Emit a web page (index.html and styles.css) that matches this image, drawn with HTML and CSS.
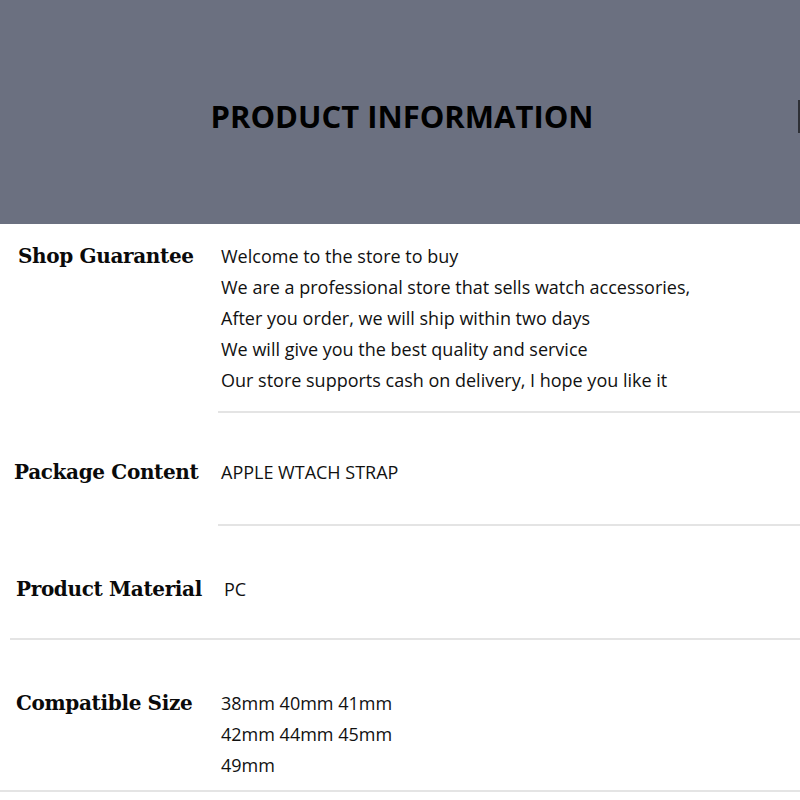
FILE: index.html
```html
<!DOCTYPE html>
<html lang="en">
<head>
    <meta charset="UTF-8">
    <meta name="viewport" content="width=device-width, initial-scale=1.0">
    <title>Product Information</title>
    <link rel="stylesheet" href="styles.css">
</head>
<body>
    <header class="banner">
        <h1 class="banner-title">PRODUCT INFORMATION</h1>
        <span class="banner-mark"></span>
    </header>

    <section class="info">
        <div class="info-row info-row--guarantee">
            <span class="info-label">Shop Guarantee</span>
            <div class="info-text">
                <p>Welcome to the store to buy</p>
                <p>We are a professional store that sells watch accessories,</p>
                <p>After you order, we will ship within two days</p>
                <p>We will give you the best quality and service</p>
                <p>Our store supports cash on delivery, I hope you like it</p>
            </div>
        </div>
        <div class="divider divider--short"></div>

        <div class="info-row info-row--package">
            <span class="info-label">Package Content</span>
            <div class="info-text">
                <p>APPLE WTACH STRAP</p>
            </div>
        </div>
        <div class="divider divider--short"></div>

        <div class="info-row info-row--material">
            <span class="info-label">Product Material</span>
            <div class="info-text info-text--nudge">
                <p>PC</p>
            </div>
        </div>
        <div class="divider divider--wide"></div>

        <div class="info-row info-row--size">
            <span class="info-label">Compatible Size</span>
            <div class="info-text">
                <p>38mm 40mm 41mm</p>
                <p>42mm 44mm 45mm</p>
                <p>49mm</p>
            </div>
        </div>
        <div class="divider"></div>
    </section>
</body>
</html>
```

FILE: styles.css
```css
:root {
    --color-banner: #6b7080;
    --color-ink: #0a0a0a;
    --color-text: #111111;
    --color-line: #e4e4e4;
    --color-white: #FFFFFF;
}

body {
    margin: 0;
    padding: 0;
    background-color: var(--color-white);
    font-family: "Open Sans", "Noto Sans", sans-serif;
}

/* Bandeau du haut */
.banner {
    position: relative;
    height: 224px;
    background-color: var(--color-banner);
    display: flex;
    justify-content: center;
    align-items: center;
}

.banner-title {
    margin: 8px 0 0 4px;
    font-size: 31px;
    font-weight: 700;
    color: #000000;
}

.banner-mark {
    position: absolute;
    right: 0;
    top: 100px;
    width: 2px;
    height: 33px;
    background-color: #2e3036;
}

/* Lignes d'informations */
.info-row {
    display: flex;
    align-items: flex-start;
    box-sizing: border-box;
}

.info-label {
    width: 220px;
    flex-shrink: 0;
    box-sizing: border-box;
    padding-left: 16px;
    font-family: "DejaVu Serif", "Liberation Serif", serif;
    font-weight: 700;
    font-size: 20px;
    line-height: 31px;
    letter-spacing: -0.35px;
    color: var(--color-ink);
}

.info-text {
    padding-left: 1px;
    font-size: 18px;
    line-height: 31px;
    color: var(--color-text);
}

.info-text p {
    margin: 0;
}

.info-text--nudge {
    padding-left: 4px;
}

.info-row--guarantee {
    height: 187px;
    padding-top: 17px;
}

.info-row--guarantee .info-label {
    padding-left: 18px;
}

.info-row--package {
    height: 111px;
    padding-top: 44px;
}

.info-row--package .info-label {
    padding-left: 14px;
}

.info-row--material {
    height: 112px;
    padding-top: 48px;
}

.info-row--size {
    height: 150px;
    padding-top: 48px;
}

.divider {
    height: 2px;
    background-color: var(--color-line);
}

.divider--short {
    margin-left: 218px;
}

.divider--wide {
    margin-left: 10px;
}
```
